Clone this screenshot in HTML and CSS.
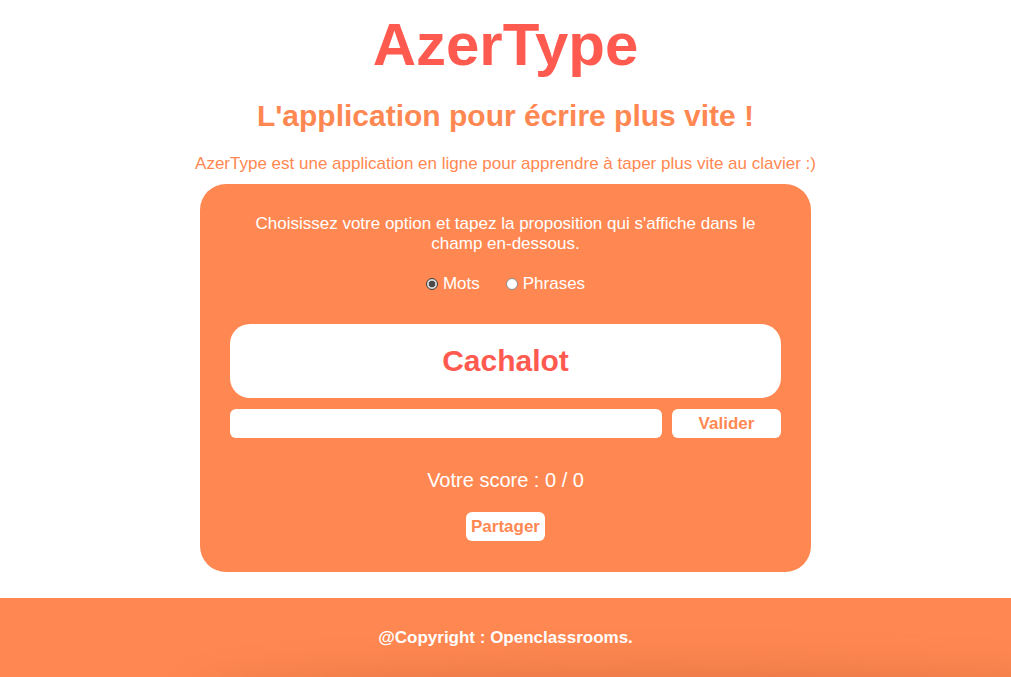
FILE: index.html
```html
<!DOCTYPE html>
<html lang="fr">
<head>
<meta charset="utf-8">
<title>AzerType</title>
<link rel="stylesheet" href="styles.css">
</head>
<body>
<main class="page">
  <h1 class="title">AzerType</h1>
  <h2 class="subtitle">L'application pour écrire plus vite !</h2>
  <p class="intro">AzerType est une application en ligne pour apprendre à taper plus vite au clavier :)</p>
  <section class="panel">
    <p class="instructions">Choisissez votre option et tapez la proposition qui s'affiche dans le champ en-dessous.</p>
    <div class="options">
      <label class="option"><input type="radio" name="mode" checked> Mots</label>
      <label class="option"><input type="radio" name="mode"> Phrases</label>
    </div>
    <div class="proposal">Cachalot</div>
    <div class="entry">
      <input class="field" type="text">
      <button class="btn btn-validate">Valider</button>
    </div>
    <p class="score">Votre score : 0 / 0</p>
    <div class="share-row"><button class="btn btn-share">Partager</button></div>
  </section>
</main>
<footer class="footer">@Copyright : Openclassrooms.</footer>
</body>
</html>
```
FILE: styles.css
```css
* { box-sizing: border-box; }
html, body {
  margin: 0;
  padding: 0;
  background: #ffffff;
  font-family: "Liberation Sans", Arial, Helvetica, sans-serif;
}
body { overflow: hidden; }
.page {
  display: flex;
  flex-direction: column;
  align-items: center;
  padding-top: 10px;
}
.title {
  margin: 0;
  font-size: 60px;
  font-weight: 700;
  color: #ff5a50;
  line-height: normal;
}
.subtitle {
  margin: 20px 0 0;
  font-size: 30px;
  font-weight: 700;
  color: #ff8852;
  line-height: normal;
}
.intro {
  margin: 21px 0 0;
  font-size: 17px;
  color: #ff8852;
  line-height: normal;
}
.panel {
  margin-top: 10px;
  width: 611px;
  background: #ff8852;
  border-radius: 26px;
  padding: 30px 30px 31px;
  display: flex;
  flex-direction: column;
  color: #ffffff;
}
.instructions {
  margin: 0 auto;
  max-width: 520px;
  text-align: center;
  font-size: 17px;
  line-height: 20px;
}
.options {
  margin-top: 20px;
  display: flex;
  justify-content: center;
  gap: 26px;
  font-size: 17px;
  line-height: normal;
}
.option {
  display: flex;
  align-items: center;
  gap: 5px;
}
.option input {
  appearance: none;
  -webkit-appearance: none;
  margin: 0;
  width: 12px;
  height: 12px;
  border-radius: 50%;
  border: 1px solid #8a8a8a;
  background: #ffffff;
}
.option input:checked {
  border: 1px solid #3f3f3f;
  background: radial-gradient(circle, #4a4a4a 0 3px, #d8d8d8 3.6px);
}
.proposal {
  margin-top: 30px;
  height: 74px;
  background: #ffffff;
  border-radius: 20px;
  display: flex;
  align-items: center;
  justify-content: center;
  font-size: 30px;
  font-weight: 700;
  color: #ff5a50;
}
.entry {
  margin-top: 11px;
  display: flex;
  gap: 10px;
  height: 29px;
}
.field {
  flex: 1;
  border: none;
  border-radius: 6px;
  background: #ffffff;
  font-family: inherit;
  font-size: 16px;
  padding: 0 8px;
  outline: none;
}
.btn {
  border: none;
  border-radius: 6px;
  background: #ffffff;
  color: #ff8852;
  font-family: inherit;
  font-size: 17px;
  font-weight: 700;
  cursor: pointer;
}
.btn-validate {
  width: 109px;
  height: 29px;
  padding: 0;
}
.score {
  margin: 31px 0 0;
  text-align: center;
  font-size: 20px;
  line-height: normal;
}
.share-row {
  margin-top: 20px;
  display: flex;
  justify-content: center;
}
.btn-share {
  height: 29px;
  padding: 0 5px;
}
.footer {
  position: relative;
  margin-top: 26px;
  background: #ff8852;
  color: #ffffff;
  text-align: center;
  font-size: 17px;
  font-weight: 700;
  padding: 30px 0 32px;
  line-height: normal;
  overflow: hidden;
}
.footer::after {
  content: "";
  position: absolute;
  left: 200px;
  right: -100px;
  bottom: -40px;
  height: 40px;
  border-radius: 50%;
  box-shadow: 0 0 40px 10px rgba(140, 60, 20, 0.22);
}
```
